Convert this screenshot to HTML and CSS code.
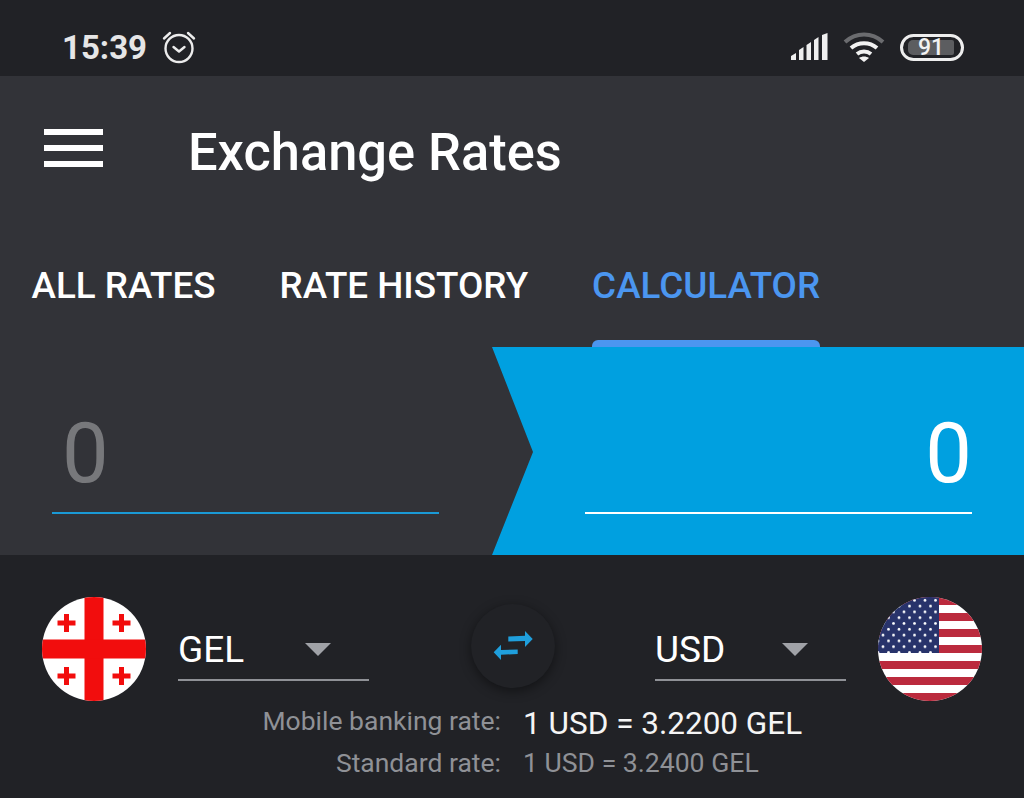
FILE: index.html
```html
<!DOCTYPE html>
<html lang="en">
<head>
  <meta charset="UTF-8">
  <title>Exchange Rates</title>
  <meta name="viewport" content="width=device-width, initial-scale=1.0">
  <link rel="stylesheet" href="styles.css">
</head>
<body>

<!-- Status bar -->
<div class="status-bar">
  <div class="status-left">
    <span class="clock">15:39</span>
    <svg class="alarm" width="34" height="34" viewBox="0 0 34 34" fill="none" stroke="#ececec" stroke-width="2.4" stroke-linecap="round" stroke-linejoin="round">
      <circle cx="17" cy="18.500" r="13.500"/>
      <path d="M11.500 17l5.500 4.500 5.500-4.500"/>
      <path d="M2 8.500 8 3M32 8.500 26 3"/>
    </svg>
  </div>
  <div class="status-right">
    <svg class="signal" width="40" height="28" viewBox="0 0 40 28" fill="#efefef">
      <path d="M1 23 6 20v7H1zM9 17l4.500-3v13H9zM16.500 12l4.500-3v18h-4.500zM24 7l4.500-3v23H24zM32 2l5.500-2v27H32z"/>
    </svg>
    <svg class="wifi" width="42" height="32" viewBox="0 0 42 32" fill="none" stroke-width="4">
      <path d="M2 11C13 1 29 1 40 11" stroke="#6b6c6f"/>
      <path d="M8 17c7.500-6.500 18.500-6.500 26 0" stroke="#f2f2f2"/>
      <path d="M14 23c4-3.200 10-3.200 14 0" stroke="#f2f2f2"/>
      <path d="M21 31l-5-4c3-2 7-2 10 0z" fill="#f2f2f2"/>
    </svg>
    <div class="battery">
      <div class="battery-fill"><span class="battery-level">91</span></div>
    </div>
  </div>
</div>

<!-- App bar + tabs -->
<header class="app-bar">
  <div class="title-row">
    <div class="menu-icon"><span></span><span></span><span></span></div>
    <h1 class="title">Exchange Rates</h1>
  </div>
  <nav class="tabs">
    <div class="tab">ALL RATES</div>
    <div class="tab">RATE HISTORY</div>
    <div class="tab active">CALCULATOR<i class="tab-marker"></i></div>
  </nav>
</header>

<!-- Amount inputs -->
<section class="amounts">
  <div class="amount-from">
    <div class="amount-field from-field">0</div>
  </div>
  <div class="amount-to">
    <div class="amount-field to-field">0</div>
  </div>
</section>

<!-- Currency pickers -->
<section class="converter">
  <div class="picker-row">
    <svg class="flag" width="104" height="104" viewBox="0 0 104 104">
      <circle cx="52" cy="52" r="52" fill="#fff"/>
      <clipPath id="geClip"><circle cx="52" cy="52" r="52"/></clipPath>
      <g clip-path="url(#geClip)" fill="#f20d0d">
        <rect x="42.500" y="0" width="19" height="104"/>
        <rect x="0" y="42.500" width="104" height="19"/>
        <path d="M22 17h5v6.500h6.500v5H27V35h-5v-6.500h-6.500v-5H22zM77 17h5v6.500h6.500v5H82V35h-5v-6.500h-6.500v-5H77zM22 70h5v6.500h6.500v5H27V88h-5v-6.500h-6.500v-5H22zM77 70h5v6.500h6.500v5H82V88h-5v-6.500h-6.500v-5H77z"/>
      </g>
    </svg>
    <div class="select select-from">
      <span>GEL</span>
      <i class="caret"></i>
    </div>
    <div class="swap">
      <svg width="44" height="36" viewBox="0 0 44 36" fill="#1f9fdc">
        <path d="M17.300 8.500 34 7.700V3l7.700 8L34 19v-6l-16.700.5z"/>
        <path d="M26.700 21.500 10 22v-5.300l-7.300 7.600L10 32v-5.300L26.700 26z"/>
      </svg>
    </div>
    <div class="select select-to">
      <span>USD</span>
      <i class="caret"></i>
    </div>
    <svg class="flag" width="104" height="104" viewBox="0 0 104 104">
      <defs>
        <clipPath id="usClip"><circle cx="52" cy="52" r="52"/></clipPath>
        <pattern id="usStars" width="21" height="11.600" patternUnits="userSpaceOnUse" x="0" y="0">
          <circle cx="5" cy="3.300" r="1.400" fill="#fff"/>
          <circle cx="15.500" cy="3.300" r="1.400" fill="#fff"/>
          <circle cx="0" cy="9.100" r="1.400" fill="#fff"/>
          <circle cx="10.500" cy="9.100" r="1.400" fill="#fff"/>
          <circle cx="21" cy="9.100" r="1.400" fill="#fff"/>
        </pattern>
      </defs>
      <g clip-path="url(#usClip)">
        <rect width="104" height="104" fill="#fff"/>
        <g fill="#bb2a3d">
          <rect y="0" width="104" height="8"/>
          <rect y="16" width="104" height="8"/>
          <rect y="32" width="104" height="8"/>
          <rect y="48" width="104" height="8"/>
          <rect y="64" width="104" height="8"/>
          <rect y="80" width="104" height="8"/>
          <rect y="96" width="104" height="8"/>
        </g>
        <rect width="61" height="56" fill="#28336b"/>
        <rect width="61" height="56" fill="url(#usStars)"/>
      </g>
    </svg>
  </div>

  <div class="rates">
    <div class="rate-label">Mobile banking rate:</div>
    <div class="rate-main">1 USD = 3.2200 GEL</div>
    <div class="rate-label">Standard rate:</div>
    <div class="rate-sub">1 USD = 3.2400 GEL</div>
  </div>
</section>

</body>
</html>
```

FILE: styles.css
```css
* {
  box-sizing: border-box;
}
body {
  margin: 0;
  height: 798px;
  overflow: hidden;
  background: #212226;
  color: #fff;
  font-family: Roboto, "Liberation Sans", sans-serif;
}

/* Status bar */
.status-bar {
  height: 76px;
  display: flex;
  align-items: center;
  justify-content: space-between;
  padding: 18px 60px 0 62px;
  background: #212226;
}
.status-left, .status-right {
  display: flex;
  align-items: center;
}
.clock {
  font-size: 33px;
  font-weight: 700;
  color: #e6e6e6;
}
.alarm {
  margin-left: 15px;
}
.signal {
  margin-right: 13px;
}
.wifi {
  margin-right: 15px;
}
.battery {
  width: 64px;
  height: 27px;
  padding: 3px 5px;
  border: 3px solid #eee;
  border-radius: 14px;
}
.battery-fill {
  width: 46px;
  height: 15px;
  background: #5c5d60;
  border-radius: 5px 2px 2px 5px;
  display: flex;
  align-items: center;
  justify-content: center;
}
.battery-level {
  font-size: 23px;
  font-weight: 500;
  color: #f2f2f2;
}

/* App bar */
.app-bar {
  height: 271px;
  background: #323338;
}
.title-row {
  height: 152px;
  display: flex;
  align-items: center;
  padding-left: 44px;
}
.menu-icon {
  width: 59px;
  display: flex;
  flex-direction: column;
  gap: 10px;
  margin-right: 85px;
  margin-top: -9px;
}
.menu-icon span {
  display: block;
  height: 6px;
  background: #fff;
}
.title {
  margin: 0;
  font-size: 52.4px;
  font-weight: 500;
}

/* Tabs */
.tabs {
  height: 119px;
  display: flex;
  gap: 64px;
  padding-left: 31.500px;
}
.tab {
  position: relative;
  height: 119px;
  padding-top: 36px;
  font-size: 36.800px;
  font-weight: 500;
  white-space: nowrap;
}
.tab.active {
  color: #4b96f0;
}
.tab-marker {
  position: absolute;
  left: 0;
  right: 0;
  bottom: 0;
  height: 7px;
  background: #4b96f0;
  border-radius: 6px 6px 0 0;
}

/* Amounts */
.amounts {
  height: 208px;
  display: flex;
  background: #323338;
}
.amount-from {
  width: 492px;
  padding: 59px 53px 0 52px;
}
.amount-to {
  flex: 1;
  padding: 59px 52px 0 93px;
  background: #00a0e0;
  clip-path: polygon(0 0, 100% 0, 100% 100%, 0 100%, 41px 105px);
}
.amount-field {
  height: 108px;
  font-size: 83px;
  line-height: 96px;
  padding: 0 10px;
}
.from-field {
  color: #77787b;
  border-bottom: 2px solid #1a9ad6;
}
.to-field {
  color: #fff;
  text-align: right;
  padding-right: 0;
  border-bottom: 2px solid #fff;
}

/* Converter */
.converter {
  padding: 42px 41px 0 42px;
}
.picker-row {
  display: flex;
  align-items: flex-start;
}
.flag {
  flex: none;
  display: block;
}
.select {
  width: 191px;
  height: 83.500px;
  margin-left: 32px;
  padding-top: 33px;
  display: flex;
  justify-content: space-between;
  font-size: 37px;
  line-height: 40px;
  border-bottom: 2px solid #8f9196;
}
.caret {
  width: 0;
  height: 0;
  margin: 13px 38px 0 0;
  border-left: 13px solid transparent;
  border-right: 13px solid transparent;
  border-top: 13px solid #a0a2a7;
}
.select-to {
  margin-left: 100px;
  margin-right: 32px;
}
.swap {
  flex: none;
  width: 84px;
  height: 84px;
  margin: 7px 0 0 102px;
  display: flex;
  align-items: center;
  justify-content: center;
  border-radius: 50%;
  background: #212226;
  box-shadow: 0 3px 12px rgba(0,0,0,0.45);
}

/* Rates */
.rates {
  display: grid;
  grid-template-columns: 459px auto;
  column-gap: 22px;
  margin-top: -1px;
  align-items: start;
}
.rate-label {
  height: 42px;
  font-size: 26.500px;
  line-height: 41px;
  color: #8f9196;
  text-align: right;
}
.rate-main {
  height: 42px;
  padding-top: 3px;
  font-size: 31.500px;
  line-height: 41px;
  color: #f5f5f5;
}
.rate-sub {
  height: 42px;
  font-size: 26.600px;
  line-height: 41px;
  color: #8f9196;
}
```
